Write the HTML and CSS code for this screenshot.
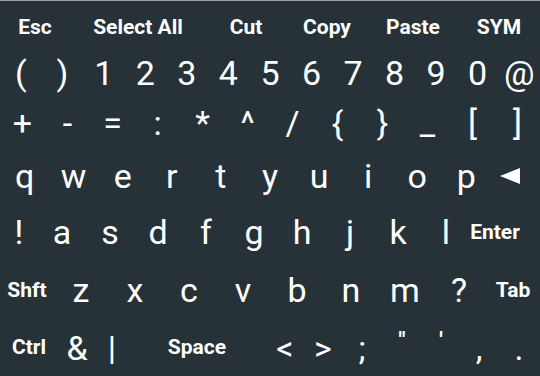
FILE: index.html
```html
<!DOCTYPE html>
<html lang="en">
<head>
  <meta charset="UTF-8" />
  <meta name="viewport" content="width=device-width, initial-scale=1" />
  <title>Keyboard</title>
  <link rel="stylesheet" href="styles.css">
</head>
<body>
<div class="keyboard">
  <div class="row row-top">
    <div class="key lbl w70">Esc</div>
    <div class="key lbl w136">Select All</div>
    <div class="key lbl w80">Cut</div>
    <div class="key lbl w82">Copy</div>
    <div class="key lbl w90">Paste</div>
    <div class="key lbl w82">SYM</div>
  </div>
  <div class="row row-num">
    <div class="key">(</div><div class="key">)</div>
    <div class="key">1</div><div class="key">2</div><div class="key">3</div>
    <div class="key">4</div><div class="key">5</div><div class="key">6</div>
    <div class="key">7</div><div class="key">8</div><div class="key">9</div>
    <div class="key">0</div><div class="key">@</div>
  </div>
  <div class="row row-sym">
    <div class="key">+</div><div class="key">-</div><div class="key">=</div>
    <div class="key">:</div><div class="key">*</div><div class="key">^</div>
    <div class="key">/</div><div class="key">{</div><div class="key">}</div>
    <div class="key">_</div><div class="key">[</div><div class="key">]</div>
  </div>
  <div class="row row-q">
    <div class="key">q</div><div class="key">w</div><div class="key">e</div>
    <div class="key">r</div><div class="key">t</div><div class="key">y</div>
    <div class="key">u</div><div class="key">i</div><div class="key">o</div>
    <div class="key">p</div>
    <div class="key">
      <svg class="back" width="20" height="16" viewBox="0 0 20 16"><polygon points="0,8 20,0 20,16" fill="#fff"/></svg>
    </div>
  </div>
  <div class="row row-a">
    <div class="key w38">!</div>
    <div class="key w48">a</div><div class="key w48">s</div><div class="key w48">d</div>
    <div class="key w48">f</div><div class="key w48">g</div><div class="key w48">h</div>
    <div class="key w48">j</div><div class="key w48">k</div><div class="key w48">l</div>
    <div class="key lbl w70 enter">Enter</div>
  </div>
  <div class="row row-z">
    <div class="key lbl">Shft</div>
    <div class="key">z</div><div class="key">x</div><div class="key">c</div>
    <div class="key">v</div><div class="key">b</div><div class="key">n</div>
    <div class="key">m</div><div class="key">?</div>
    <div class="key lbl">Tab</div>
  </div>
  <div class="row row-bottom">
    <div class="key lbl w58">Ctrl</div>
    <div class="key w38">&amp;</div>
    <div class="key w32">|</div>
    <div class="key lbl w138">Space</div>
    <div class="key w38">&lt;</div>
    <div class="key w38">&gt;</div>
    <div class="key w40">;</div>
    <div class="key w40 small">"</div>
    <div class="key w38 small">'</div>
    <div class="key w38">,</div>
    <div class="key w42">.</div>
  </div>
</div>
</body>
</html>
```

FILE: styles.css
```css
* { box-sizing: border-box; }
body {
  margin: 0;
  background: #263238;
  color: #fff;
  font-family: Roboto, 'Noto Sans', sans-serif;
}
.keyboard {
  width: 540px;
  height: 376px;
  border-top: 1px solid #9aa0a6;
  display: flex;
  flex-direction: column;
}
.row {
  display: flex;
  align-items: center;
}
.row-top { height: 48px; padding-top: 4px; }
.row-num { height: 48px; }
.row-sym { height: 51px; }
.row-q { height: 55px; }
.row-a { height: 58px; }
.row-z { height: 58px; }
.row-bottom { height: 57px; }

.key {
  flex: 1 1 0;
  display: flex;
  align-items: center;
  justify-content: center;
  height: 100%;
  font-size: 34px;
  line-height: 1;
}
.key.lbl {
  font-size: 21px;
  font-weight: bold;
}
.key.small {
  font-size: 22px;
  font-weight: bold;
  padding-bottom: 14px;
}
.back { margin-right: 10px; }
.enter { padding-right: 20px; }

.w32 { flex: 0 0 32px; }
.w38 { flex: 0 0 38px; }
.w40 { flex: 0 0 40px; }
.w42 { flex: 0 0 42px; }
.w48 { flex: 0 0 48px; }
.w58 { flex: 0 0 58px; }
.w70 { flex: 0 0 70px; }
.w80 { flex: 0 0 80px; }
.w82 { flex: 0 0 82px; }
.w90 { flex: 0 0 90px; }
.w136 { flex: 0 0 136px; }
.w138 { flex: 0 0 138px; }
```
